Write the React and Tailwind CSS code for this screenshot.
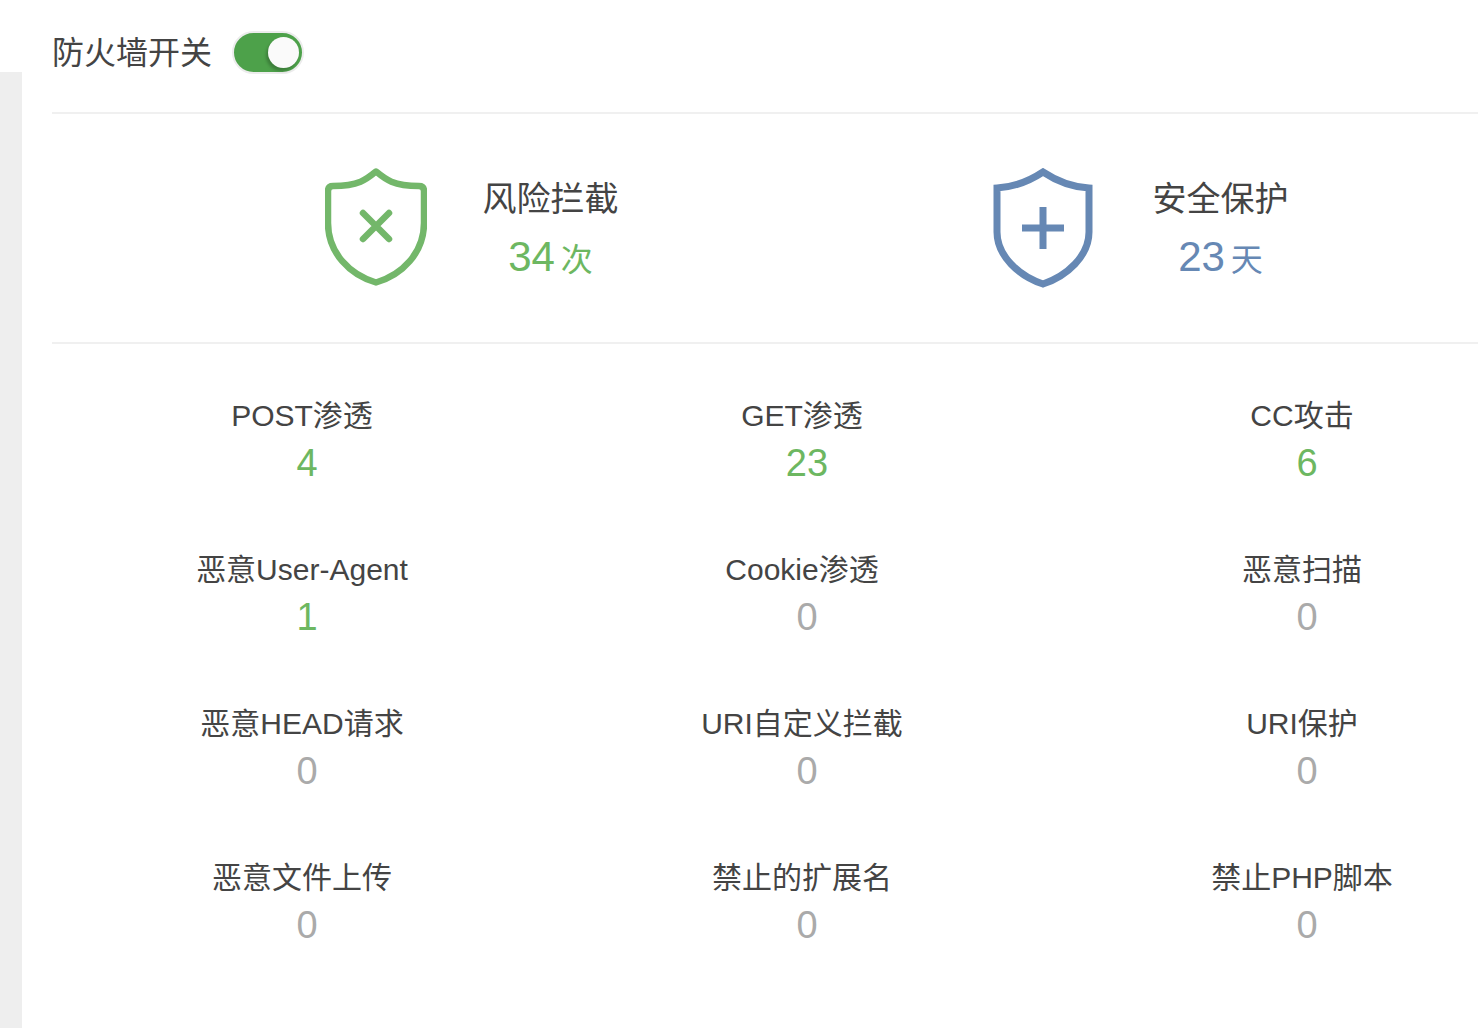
import React from "react";

const stats = [
  ["POST渗透", 4],
  ["GET渗透", 23],
  ["CC攻击", 6],
  ["恶意User-Agent", 1],
  ["Cookie渗透", 0],
  ["恶意扫描", 0],
  ["恶意HEAD请求", 0],
  ["URI自定义拦截", 0],
  ["URI保护", 0],
  ["恶意文件上传", 0],
  ["禁止的扩展名", 0],
  ["禁止PHP脚本", 0],
];

const GreenShield = () => (
  <svg width="102" height="120" viewBox="0 0 102 120" fill="none" stroke="#73b76a" strokeWidth="6.5" strokeLinecap="round" strokeLinejoin="round">
    <path d="M51 3.500C42 11 34 18 8 18Q3 18 3 23V55C3 85 25 107 51 114.500C77 107 99 85 99 55V23Q99 18 94 18C68 18 60 11 51 3.500Z" />
    <path d="M38 45L64 71M64 45L38 71" />
  </svg>
);

const BlueShield = () => (
  <svg width="100" height="120" viewBox="0 0 100 120" fill="none" stroke="#6688b4" strokeWidth="7">
    <path d="M50 4C38 12 22 19 4 20V64C4 88 26 108 50 116C74 108 96 88 96 64V20C78 19 62 12 50 4Z" />
    <path d="M50 39V81M29 60H71" />
  </svg>
);

const Toggle = () => (
  <div className="relative w-[72px] h-[43px] rounded-full bg-[#4da14a] border-2 border-[#ececec]">
    <div className="absolute left-[34px] top-[4px] w-[31px] h-[31px] rounded-full bg-[#fafafa] shadow-[-2px_3px_3px_rgba(0,0,0,0.22)]" />
  </div>
);

const Summary = ({ icon, title, value, unit, color, textClass }) => (
  <div className="w-[667px] shrink-0 flex items-center pl-[273px]">
    <div className="w-[102px] flex justify-center">{icon}</div>
    <div className={`w-[137px] pt-[6px] text-center ${textClass}`}>
      <div className="text-[34px] leading-[40px] text-[#444]">{title}</div>
      <div className={`mt-[14px] leading-[48px] text-[42px] ${color}`}>
        {value}
        <span className="ml-[6px] text-[32px]">{unit}</span>
      </div>
    </div>
  </div>
);

const Stat = ({ label, count }) => (
  <div className="h-[154px] w-[500px] shrink-0 text-center">
    <div className="text-[30px] leading-[36px] text-[#444]">{label}</div>
    <div className={`mt-[6px] ml-[10px] text-[38px] leading-[46px] ${count > 0 ? "text-[#6db761]" : "text-[#aaaaaa]"}`}>
      {count}
    </div>
  </div>
);

export default function App() {
  return (
    <div
      className="w-[1478px] h-[1028px] overflow-hidden flex bg-white"
      style={{ fontFamily: '"Liberation Sans", "Noto Sans CJK SC", sans-serif' }}
    >
      <div className="w-[22px] shrink-0 mt-[72px] bg-[#eeeeee]" />
      <div className="ml-[30px] flex-1 min-w-0">
        <div className="h-[114px] flex items-center pb-[8px] border-b-2 border-[#f0f0f0]">
          <span className="mt-[2px] text-[32px] text-[#444]">防火墙开关</span>
          <div className="ml-[20px]">
            <Toggle />
          </div>
        </div>
        <div className="h-[230px] flex items-center border-b-2 border-[#f0f0f0]">
          <Summary icon={<GreenShield />} title="风险拦截" value="34" unit="次" color="text-[#6db761]" textClass="ml-[55px]" />
          <Summary icon={<BlueShield />} title="安全保护" value="23" unit="天" color="text-[#6688b4]" textClass="ml-[58px]" />
        </div>
        <div className="pt-[54px] grid grid-cols-[500px_500px_500px]">
          {stats.map(([label, count]) => (
            <Stat key={label} label={label} count={count} />
          ))}
        </div>
      </div>
    </div>
  );
}
